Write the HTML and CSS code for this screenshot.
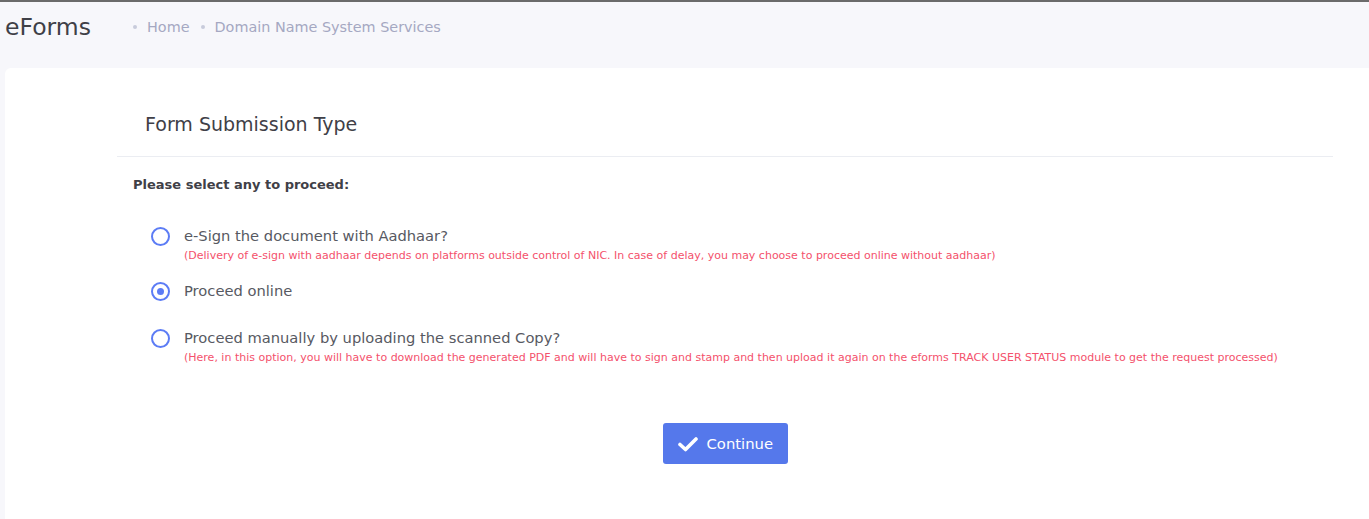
FILE: index.html
```html
<!DOCTYPE html>
<html>
<head>
<meta charset="utf-8">
<link rel="stylesheet" href="styles.css">
</head>
<body>
<div class="topline"></div>
<header class="header">
  <div class="brand">eForms</div>
  <nav class="crumbs">
    <span class="dot"></span><span class="crumb">Home</span>
    <span class="dot"></span><span class="crumb">Domain Name System Services</span>
  </nav>
</header>
<main class="card">
  <div class="inner">
    <div class="title">Form Submission Type</div>
    <div class="body">
      <div class="prompt">Please select any to proceed:</div>
      <div class="options">
        <label class="opt opt-first">
          <span class="radio"></span>
          <span class="texts">
            <span class="label">e-Sign the document with Aadhaar?</span>
            <span class="note">(Delivery of e-sign with aadhaar depends on platforms outside control of NIC. In case of delay, you may choose to proceed online without aadhaar)</span>
          </span>
        </label>
        <label class="opt opt-second">
          <span class="radio checked"></span>
          <span class="texts">
            <span class="label">Proceed online</span>
          </span>
        </label>
        <label class="opt">
          <span class="radio"></span>
          <span class="texts">
            <span class="label">Proceed manually by uploading the scanned Copy?</span>
            <span class="note">(Here, in this option, you will have to download the generated PDF and will have to sign and stamp and then upload it again on the eforms TRACK USER STATUS module to get the request processed)</span>
          </span>
        </label>
      </div>
      <div class="actions">
        <button class="btn">
          <svg width="20" height="16" viewBox="0 0 20 16"><path d="M2 8.5 L7.5 13.5 L18 3" fill="none" stroke="#fff" stroke-width="3.6" stroke-linecap="round" stroke-linejoin="round"/></svg>
          <span>Continue</span>
        </button>
      </div>
    </div>
  </div>
</main>
</body>
</html>
```
FILE: styles.css
```css
* { box-sizing: border-box; }
html, body { margin: 0; padding: 0; }
body {
  background: #f7f7fb;
  font-family: "DejaVu Sans", "Open Sans", sans-serif;
  color: #575962;
  height: 519px;
  overflow: hidden;
}
.topline { height: 2px; background: #6b6b6b; }
.header {
  height: 66px;
  display: flex;
  align-items: flex-start;
  padding-top: 11px;
}
.brand {
  font-size: 23.5px;
  color: #3f4047;
  padding-left: 5px;
  width: 131px;
}
.crumbs {
  display: flex;
  align-items: center;
  padding-top: 6px;
  font-size: 14.4px;
  color: #a5a8c2;
}
.dot {
  width: 4px; height: 4px; border-radius: 50%;
  background: #c8cbdb;
  margin: 0 10px 0 2px;
}
.crumb { margin-right: 9px; }
.card {
  background: #fff;
  margin-left: 5px;
  border-top-left-radius: 6px;
  height: 460px;
}
.inner {
  margin-left: 112px;
  width: 1216px;
}
.title {
  font-size: 19px;
  color: #3f4047;
  padding: 45px 0 0 28px;
  height: 89px;
  border-bottom: 1px solid #ebedf2;
}
.body { padding: 20px 16px 0 16px; }
.prompt {
  font-size: 13px;
  font-weight: bold;
  color: #3f4047;
}
.options {
  display: flex;
  flex-direction: column;
  padding: 34px 0 0 18px;
}
.opt { display: flex; align-items: flex-start; gap: 14px; }
.opt-first { margin-bottom: 17px; }
.opt-second { margin-bottom: 27px; }
.radio {
  width: 19px; height: 19px;
  border: 2px solid #5c7cf5;
  border-radius: 50%;
  display: flex; align-items: center; justify-content: center;
  flex: none;
  margin-top: 1px;
}
.radio.checked::after {
  content: "";
  width: 7px; height: 7px; border-radius: 50%;
  background: #5c7cf5;
}
.texts { display: flex; flex-direction: column; }
.label { font-size: 14.7px; color: #575962; line-height: 20px; }
.note { font-size: 11px; color: #f4516c; line-height: 16px; margin-top: 2px; }
.actions { display: flex; justify-content: center; padding-top: 57px; margin-left: -16px; margin-right: -16px; }
.btn {
  display: flex; align-items: center; gap: 9px;
  background: #5578eb;
  border: none;
  border-radius: 3px;
  color: #fff;
  font-family: inherit;
  font-size: 14.8px;
  height: 41px;
  padding: 0 14px 0 15px;
  width: 125px;
}
```
